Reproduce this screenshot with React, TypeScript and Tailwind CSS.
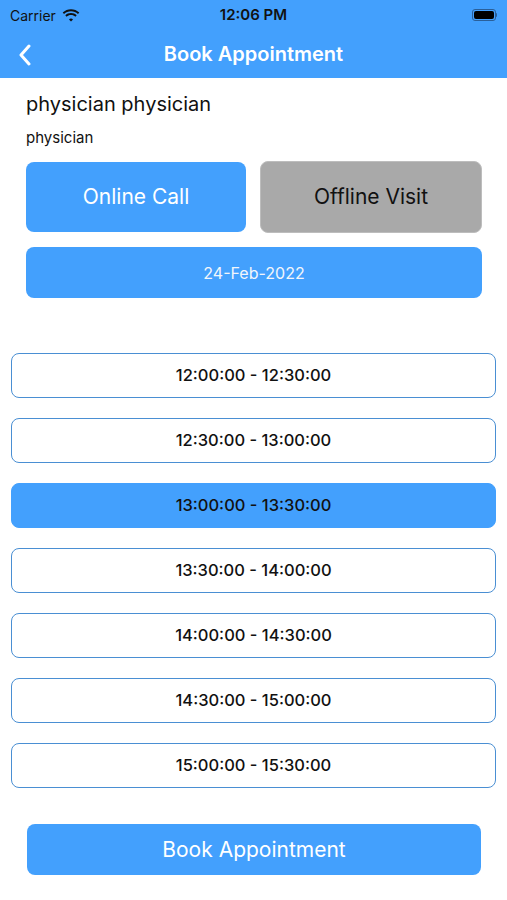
import React, { useState } from "react";

const SLOTS = [
  "12:00:00 - 12:30:00",
  "12:30:00 - 13:00:00",
  "13:00:00 - 13:30:00",
  "13:30:00 - 14:00:00",
  "14:00:00 - 14:30:00",
  "14:30:00 - 15:00:00",
  "15:00:00 - 15:30:00",
];

function WifiIcon() {
  return (
    <svg width="18" height="13" viewBox="0 0 18 13" fill="#111">
      <path d="M9 2.2c2.7 0 5.1 1 7 2.7l1.3-1.4C15 1.4 12.1.2 9 .2S3 1.4.7 3.5L2 4.9c1.9-1.7 4.3-2.7 7-2.7z" />
      <path d="M9 6c1.7 0 3.2.6 4.4 1.7l1.3-1.4C13.2 4.8 11.2 4 9 4S4.8 4.8 3.3 6.3l1.3 1.4C5.8 6.6 7.3 6 9 6z" />
      <path d="M9 9.6c.8 0 1.5.3 2 .8L9 12.6l-2-2.2c.5-.5 1.2-.8 2-.8z" />
    </svg>
  );
}

function Battery() {
  return (
    <div className="flex items-center">
      <div className="w-[24px] h-[12px] rounded-[3px] border border-[#2a5f99] p-[1px]">
        <div className="w-full h-full rounded-[2px] bg-black" />
      </div>
      <div className="w-[1.5px] h-[4px] bg-[#2a5f99] rounded-r-sm" />
    </div>
  );
}

export default function App() {
  const [mode, setMode] = useState<"online" | "offline">("online");
  const [selected, setSelected] = useState(2);

  return (
    <div className="w-[507px] h-[900px] bg-white font-['Inter',sans-serif] overflow-hidden">
      {/* header */}
      <div className="bg-[#43a0fd]">
        <div className="h-[30px] flex items-center justify-between px-[10px] relative">
          <div className="flex items-center gap-[6px] text-[14px] text-[#111]">
            <span>Carrier</span>
            <WifiIcon />
          </div>
          <span className="absolute left-0 right-0 text-center text-[15px] font-semibold text-[#111] pointer-events-none">
            12:06 PM
          </span>
          <Battery />
        </div>
        <div className="h-[48px] flex items-center relative">
          <button className="absolute left-[14px] top-[10px] p-1">
            <svg width="14" height="22" viewBox="0 0 14 22" fill="none" stroke="white" strokeWidth="3" strokeLinecap="round" strokeLinejoin="round">
              <path d="M11 2L3 11l8 9" />
            </svg>
          </button>
          <h1 className="w-full text-center text-white text-[20px] font-semibold">Book Appointment</h1>
        </div>
      </div>

      {/* doctor */}
      <div className="pl-[26px] pr-[25px] pt-[14px]">
        <p className="text-[20px] leading-[24px] text-[#111]">physician physician</p>
        <p className="text-[15px] leading-[18px] text-[#111] mt-[13px]">physician</p>

        <div className="flex gap-[14px] mt-[15px]">
          <button
            onClick={() => setMode("online")}
            className={`flex-1 h-[70px] rounded-[8px] text-[21px] ${
              mode === "online" ? "bg-[#43a0fd] text-white" : "bg-[#a9a9a9] text-[#111] border border-[#bdbdbd]"
            }`}
          >
            Online Call
          </button>
          <button
            onClick={() => setMode("offline")}
            className={`flex-1 h-[72px] -mt-[1px] rounded-[8px] text-[21px] ${
              mode === "offline" ? "bg-[#43a0fd] text-white" : "bg-[#a9a9a9] text-[#111] border border-[#bdbdbd]"
            }`}
          >
            Offline Visit
          </button>
        </div>

        <button className="w-full h-[51px] mt-[14px] rounded-[8px] bg-[#43a0fd] text-[#f2f6fb] text-[16px]">
          24-Feb-2022
        </button>
      </div>

      {/* slots */}
      <div className="px-[11px] mt-[55px] flex flex-col gap-[20px]">
        {SLOTS.map((s, i) => (
          <button
            key={s}
            onClick={() => setSelected(i)}
            className={`h-[45px] rounded-[8px] text-[16.5px] font-medium text-[#111] ${
              selected === i ? "bg-[#43a0fd] border border-[#43a0fd]" : "bg-white border-[1.5px] border-[#4a8fd3]"
            }`}
          >
            {s}
          </button>
        ))}
      </div>

      <div className="pl-[27px] pr-[26px] mt-[36px]">
        <button className="w-full h-[51px] rounded-[8px] bg-[#43a0fd] text-white text-[21px]">
          Book Appointment
        </button>
      </div>
    </div>
  );
}
